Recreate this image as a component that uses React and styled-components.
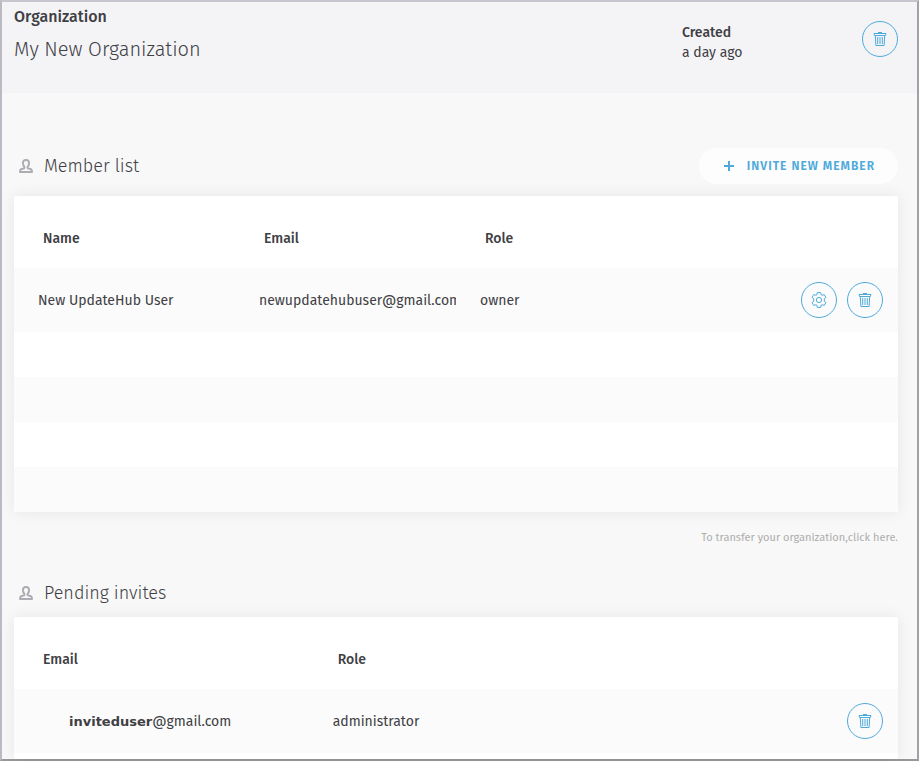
import React from "react";
import styled, { createGlobalStyle } from "styled-components";

const GlobalStyle = createGlobalStyle`
  *, *::before, *::after { box-sizing: border-box; }
  body {
    margin: 0;
    background: #f8f8f8;
    color: #404044;
    font-family: "Fira Sans", "Noto Sans", sans-serif;
    font-size: 14px;
    line-height: 20px;
  }
  h1, h2, p, dl, dt, dd { margin: 0; }
`;

const Page = styled.div`
  display: flex;
  flex-direction: column;
  min-height: 100vh;
  border: 2px solid;
  border-color: #c8c7cf #a2a1a7 #98979c #bbbac2;
`;

const Header = styled.header`
  display: grid;
  grid-template-columns: 1fr 216px;
  min-height: 91px;
  padding: 5px 19px 16px 12px;
  background: #f4f4f7;
`;

const Label = styled.p`
  font-size: 16px;
  font-weight: 500;
`;

const OrgName = styled.h1`
  margin-top: 8px;
  font-size: 20px;
  font-weight: 300;
  line-height: 28px;
`;

const HeaderSide = styled.div`
  display: flex;
  justify-content: space-between;
  align-items: flex-start;
  padding-top: 14px;
`;

const Created = styled.dl`
  margin-top: 2px;
  dt { font-weight: 500; }
`;

const Main = styled.main`
  display: flex;
  flex-direction: column;
  flex: 1;
  padding: 55px 19px 0 12px;
`;

const SectionBar = styled.div`
  display: flex;
  align-items: center;
  justify-content: space-between;
  min-height: 36px;
  margin-bottom: ${(p) => (p.$tight ? 6 : 12)}px;
`;

const SectionTitle = styled.h2`
  display: flex;
  align-items: center;
  gap: 10px;
  padding-left: 4px;
  font-size: 18px;
  font-weight: 300;
  line-height: 24px;
  svg { color: #acacb2; }
`;

const InviteButton = styled.button`
  display: flex;
  align-items: center;
  gap: 13px;
  height: 36px;
  padding: 0 23px 0 25px;
  border: 0;
  border-radius: 18px;
  background: #fdfdfd;
  color: #4eaadc;
  font: inherit;
  font-size: 12px;
  font-weight: 600;
  letter-spacing: 1px;
  cursor: pointer;
`;

const RoundButton = styled.button`
  display: inline-flex;
  align-items: center;
  justify-content: center;
  width: 36px;
  height: 36px;
  padding: 0;
  border: 1px solid #4eaadc;
  border-radius: 50%;
  background: transparent;
  color: #4eaadc;
  cursor: pointer;
`;

const Panel = styled.section`
  flex-grow: ${(p) => (p.$fill ? 1 : 0)};
  border-radius: ${(p) => (p.$fill ? "2px 2px 0 0" : "2px")};
  background: #fff;
  box-shadow: 0 0 16px rgba(0, 0, 0, 0.08);
`;

const Table = styled.table`
  width: 100%;
  table-layout: fixed;
  border-collapse: collapse;
  text-align: left;
`;

const HeadCell = styled.th`
  height: 72px;
  padding: 14px 0 0 29px;
  font-weight: 500;
`;

const Row = styled.tr`
  height: ${(p) => (p.$empty ? 45 : 64)}px;
  background: ${(p) => (p.$shaded ? "#fbfbfb" : "#fff")};
`;

const Cell = styled.td`
  padding: 2px 0 0 ${(p) => (p.$inset ? 55 : 24)}px;
  overflow: hidden;
  white-space: nowrap;
`;

const ActionCell = styled.td`
  padding: 0 15px 0 0;
`;

const Actions = styled.div`
  display: flex;
  justify-content: flex-end;
  gap: 10px;
`;

const Username = styled.strong`
  font-family: "DejaVu Sans", sans-serif;
  font-size: 13px;
  line-height: 18px;
`;

const Transfer = styled.p`
  margin: 16px 0 27px;
  color: #adadad;
  font-size: 11px;
  text-align: right;
  a { color: inherit; text-decoration: none; }
`;

const TrashIcon = () => (
  <svg width="14" height="14" viewBox="0 0 14 14" fill="none" stroke="currentColor" aria-hidden="true">
    <path d="M5 .5h4" />
    <path d="M1 1.500h12l-.6 2H1.600z" />
    <path d="M2.300 3.500l.6 10h8.200l.6-10M4.700 5v7M7 5v7M9.300 5v7" />
  </svg>
);

const GearIcon = () => (
  <svg width="16" height="16" viewBox="0 0 16 16" fill="none" stroke="currentColor" strokeLinejoin="round" aria-hidden="true">
    <path d="M6.300.600h3.400l.3 2 1.200.7 2-.8 1.700 2.900-1.600 1.300v2.600l1.600 1.300-1.700 2.900-2-.8-1.200.7-.3 2H6.300l-.3-2-1.200-.7-2 .8-1.700-2.900 1.600-1.300V6.700L1.100 5.400l1.700-2.900 2 .8L6 2.600z" />
    <circle cx="8" cy="8" r="2.600" />
  </svg>
);

const PlusIcon = () => (
  <svg width="10" height="10" viewBox="0 0 10 10" stroke="currentColor" strokeWidth="2" aria-hidden="true">
    <path d="M0 5h10M5 0v10" />
  </svg>
);

const PersonIcon = () => (
  <svg width="16" height="16" viewBox="0 0 16 16" fill="none" stroke="currentColor" strokeWidth="2" strokeLinejoin="round" aria-hidden="true">
    <path d="M8 2C5.700 2 4.900 3.300 5 5.200c.1 1.700.6 3 1.400 3.800v1L3.200 11.200C2.300 11.600 2 12.500 2 14h12c0-1.500-.3-2.400-1.200-2.800L9.600 10V9c.8-.8 1.300-2.100 1.400-3.800C11.100 3.300 10.300 2 8 2z" />
  </svg>
);

const DeleteButton = ({ label }) => (
  <RoundButton type="button" aria-label={label}><TrashIcon /></RoundButton>
);

const members = [{ name: "New UpdateHub User", email: "newupdatehubuser@gmail.com", role: "owner" }];
const emptyRows = [false, true, false, true];

export default function App() {
  return (
    <Page>
      <GlobalStyle />
      <Header>
        <div>
          <Label>Organization</Label>
          <OrgName>My New Organization</OrgName>
        </div>
        <HeaderSide>
          <Created>
            <dt>Created</dt>
            <dd>a day ago</dd>
          </Created>
          <DeleteButton label="Delete organization" />
        </HeaderSide>
      </Header>
      <Main>
        <SectionBar>
          <SectionTitle><PersonIcon />Member list</SectionTitle>
          <InviteButton type="button"><PlusIcon />INVITE NEW MEMBER</InviteButton>
        </SectionBar>
        <Panel>
          <Table>
            <thead>
              <tr>
                <HeadCell>Name</HeadCell>
                <HeadCell>Email</HeadCell>
                <HeadCell>Role</HeadCell>
                <HeadCell />
              </tr>
            </thead>
            <tbody>
              {members.map((m) => (
                <Row key={m.email} $shaded>
                  <Cell>{m.name}</Cell>
                  <Cell>{m.email}</Cell>
                  <Cell>{m.role}</Cell>
                  <ActionCell>
                    <Actions>
                      <RoundButton type="button" aria-label="Edit member"><GearIcon /></RoundButton>
                      <DeleteButton label="Remove member" />
                    </Actions>
                  </ActionCell>
                </Row>
              ))}
              {emptyRows.map((shaded, i) => (
                <Row key={i} $empty $shaded={shaded}><Cell colSpan={4} /></Row>
              ))}
            </tbody>
          </Table>
        </Panel>
        <Transfer>To transfer your organization,<a href="#transfer">click here.</a></Transfer>
        <SectionBar $tight>
          <SectionTitle><PersonIcon />Pending invites</SectionTitle>
        </SectionBar>
        <Panel $fill>
          <Table>
            <thead>
              <tr>
                <HeadCell>Email</HeadCell>
                <HeadCell>Role</HeadCell>
                <HeadCell />
              </tr>
            </thead>
            <tbody>
              <Row $shaded>
                <Cell $inset><Username>inviteduser</Username>@gmail.com</Cell>
                <Cell>administrator</Cell>
                <ActionCell>
                  <Actions><DeleteButton label="Delete invite" /></Actions>
                </ActionCell>
              </Row>
            </tbody>
          </Table>
        </Panel>
      </Main>
    </Page>
  );
}
